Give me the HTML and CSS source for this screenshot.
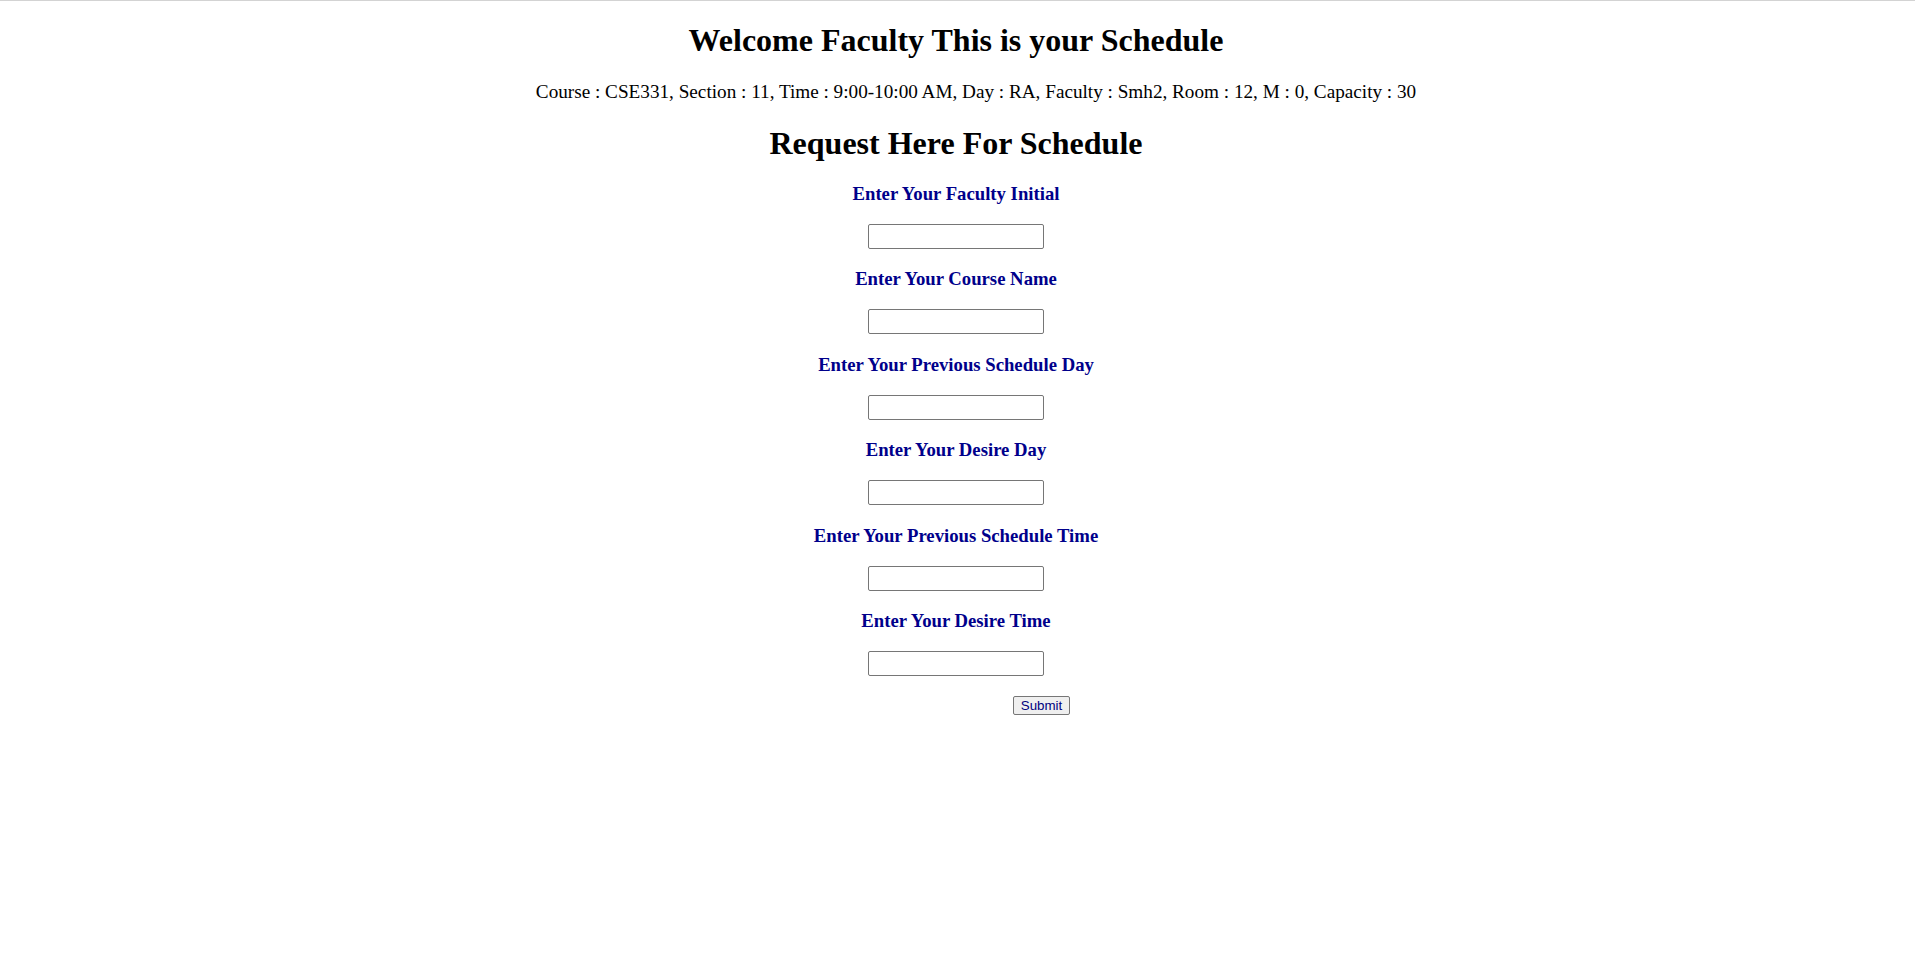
FILE: index.html
```html
<!DOCTYPE html>
<html>
<head>
<meta charset="utf-8">
<title>Faculty Schedule</title>
<link rel="stylesheet" href="styles.css">
</head>
<body>
<div class="page">
  <h1 class="title">Welcome Faculty This is your Schedule</h1>
  <ul class="schedule">
    <li>Course : CSE331, Section : 11, Time : 9:00-10:00 AM, Day : RA, Faculty : Smh2, Room : 12, M : 0, Capacity : 30</li>
  </ul>
  <h1 class="title title-request">Request Here For Schedule</h1>
  <form class="request-form">
    <div class="field">
      <label class="field-label">Enter Your Faculty Initial</label>
      <input class="field-input" type="text">
    </div>
    <div class="field">
      <label class="field-label">Enter Your Course Name</label>
      <input class="field-input" type="text">
    </div>
    <div class="field">
      <label class="field-label">Enter Your Previous Schedule Day</label>
      <input class="field-input" type="text">
    </div>
    <div class="field">
      <label class="field-label">Enter Your Desire Day</label>
      <input class="field-input" type="text">
    </div>
    <div class="field">
      <label class="field-label">Enter Your Previous Schedule Time</label>
      <input class="field-input" type="text">
    </div>
    <div class="field">
      <label class="field-label">Enter Your Desire Time</label>
      <input class="field-input" type="text">
    </div>
    <div class="actions">
      <button class="submit-btn" type="button">Submit</button>
    </div>
  </form>
</div>
</body>
</html>
```
FILE: styles.css
```css
html, body {
  margin: 0;
  padding: 0;
  background: #ffffff;
}

body {
  border-top: 1px solid #d3d3d3;
  font-family: "Liberation Serif", "Times New Roman", serif;
  color: #000000;
}

.page {
  padding-right: 3px;
  text-align: center;
}

.title {
  font-size: 32px;
  line-height: 37px;
  font-weight: bold;
  margin: 0;
  padding-top: 21px;
}

.title-request {
  padding-top: 22px;
}

.schedule {
  list-style: none;
  margin: 0;
  padding: 22px 0 0 40px;
  font-size: 19.2px;
  line-height: 22px;
}

.request-form {
  display: flex;
  flex-direction: column;
  align-items: center;
  padding-top: 1px;
}

.field {
  display: flex;
  flex-direction: column;
  align-items: center;
  padding-top: 19.5px;
}

.field-label {
  display: block;
  font-size: 18.72px;
  line-height: 21px;
  font-weight: bold;
  color: #00008b;
}

.field-input {
  box-sizing: border-box;
  width: 176px;
  height: 25px;
  margin: 20px 0 0 0;
  padding: 1px 2px;
  border: 1px solid #767676;
  border-radius: 2px;
  background: #ffffff;
  font-family: "Liberation Sans", Arial, sans-serif;
  font-size: 13.33px;
}

.actions {
  padding-top: 20px;
  text-align: center;
}

.submit-btn {
  box-sizing: border-box;
  width: 57px;
  height: 19px;
  margin-left: 171px;
  padding: 0 6px;
  border: 1px solid #767676;
  border-radius: 2px;
  background: #efefef;
  color: #000080;
  font-family: "Liberation Sans", Arial, sans-serif;
  font-size: 13.33px;
  line-height: 15px;
}
```
